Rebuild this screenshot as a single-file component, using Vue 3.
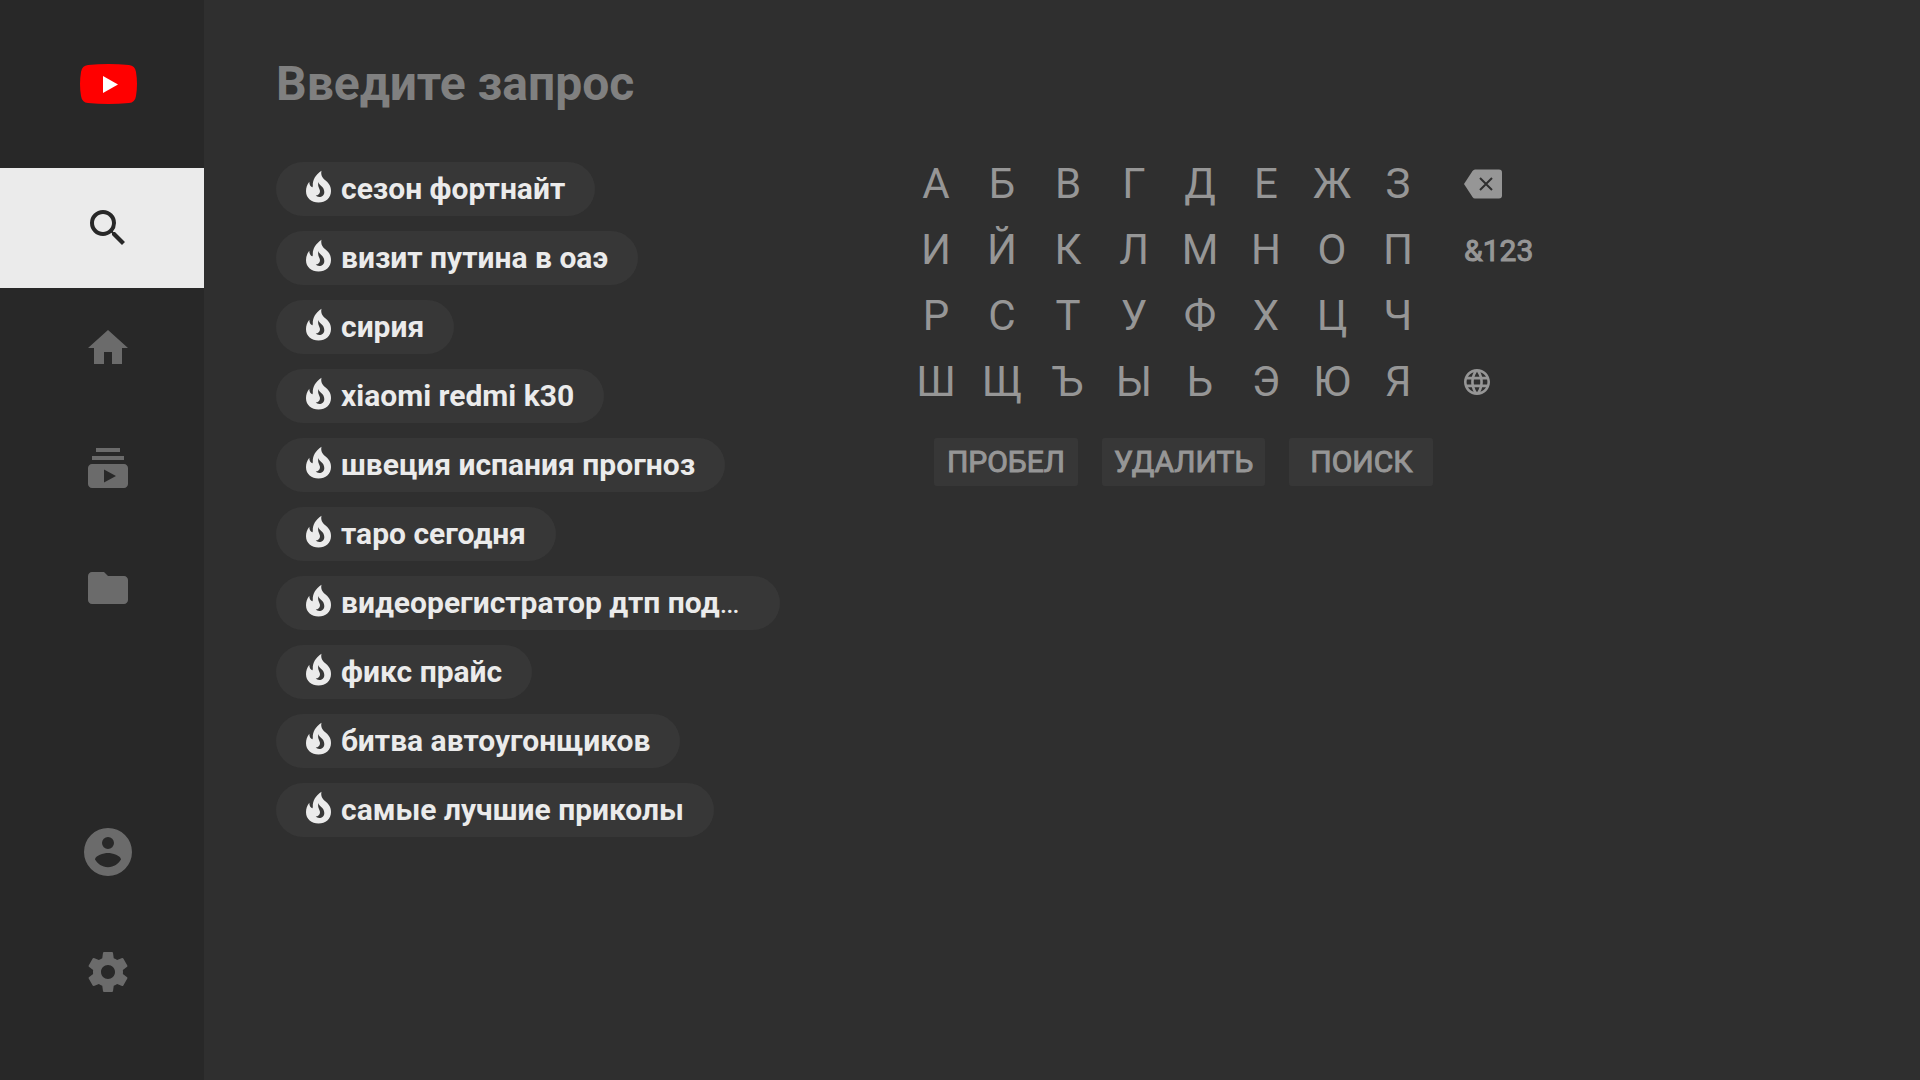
<script setup>
const menu = [
  { label: 'Поиск', path: 'M15.5 14h-.79l-.28-.27A6.471 6.471 0 0 0 16 9.5 6.5 6.5 0 1 0 9.5 16c1.61 0 3.09-.59 4.23-1.57l.27.28v.79l5 4.99L20.49 19l-4.99-5zm-6 0C7.01 14 5 11.99 5 9.5S7.01 5 9.5 5 14 7.01 14 9.5 11.99 14 9.5 14z', active: true },
  { label: 'Главная', path: 'M10 20v-6h4v6h5v-8h3L12 3 2 12h3v8z' },
  { label: 'Подписки', path: 'M20 8H4V6h16v2zm-2-6H6v2h12V2zm4 10v8c0 1.1-.9 2-2 2H4c-1.1 0-2-.9-2-2v-8c0-1.1.9-2 2-2h16c1.1 0 2 .9 2 2zm-6 4l-6-3.27v6.53L16 16z' },
  { label: 'Библиотека', path: 'M10 4H4c-1.1 0-1.99.9-1.99 2L2 18c0 1.1.9 2 2 2h16c1.1 0 2-.9 2-2V8c0-1.1-.9-2-2-2h-8l-2-2z' },
]
const account = [
  { label: 'Аккаунт', path: 'M12 0a12 12 0 1 0 0 24 12 12 0 0 0 0-24zM12 4.5a3 3 0 1 1 0 6 3 3 0 0 1 0-6zM12 19.6c-3 0-5.2-1.6-6.5-3.8.1-2.1 4.3-3.3 6.5-3.3s6.4 1.2 6.5 3.3c-1.3 2.2-3.5 3.8-6.5 3.8z' },
  { label: 'Настройки', path: 'M19.43 12.98c.04-.32.07-.64.07-.98s-.03-.66-.07-.98l2.11-1.65c.19-.15.24-.42.12-.64l-2-3.46c-.12-.22-.39-.3-.61-.22l-2.49 1c-.52-.4-1.08-.73-1.69-.98l-.38-2.65C14.46 2.18 14.25 2 14 2h-4c-.25 0-.46.18-.49.42l-.38 2.65c-.61.25-1.17.59-1.69.98l-2.49-1c-.23-.09-.49 0-.61.22l-2 3.46c-.13.22-.07.49.12.64l2.11 1.65c-.04.32-.07.65-.07.98s.03.66.07.98l-2.11 1.65c-.19.15-.24.42-.12.64l2 3.46c.12.22.39.3.61.22l2.49-1c.52.4 1.08.73 1.69.98l.38 2.65c.03.24.24.42.49.42h4c.25 0 .46-.18.49-.42l.38-2.65c.61-.25 1.17-.59 1.69-.98l2.49 1c.23.09.49 0 .61-.22l2-3.46c.12-.22.07-.49-.12-.64l-2.11-1.65zM12 15.5c-1.93 0-3.5-1.57-3.5-3.5s1.57-3.5 3.5-3.5 3.5 1.57 3.5 3.5-1.57 3.5-3.5 3.5z' },
]
const suggestions = [
  { text: 'сезон фортнайт' },
  { text: 'визит путина в оаэ' },
  { text: 'сирия' },
  { text: 'xiaomi redmi k30' },
  { text: 'швеция испания прогноз' },
  { text: 'таро сегодня' },
  { text: 'видеорегистратор дтп под', cut: true },
  { text: 'фикс прайс' },
  { text: 'битва автоугонщиков' },
  { text: 'самые лучшие приколы' },
]
const letters = [...'АБВГДЕЖЗИЙКЛМНОПРСТУФХЦЧШЩЪЫЬЭЮЯ']
</script>

<template>
  <div class="page">
    <nav class="sidebar">
      <a class="logo" href="#" aria-label="YouTube">
        <svg width="57" height="40" viewBox="0 0 57 40">
          <path fill="#f00" d="M8 1Q28 -1 49 1Q55 1.5 56 8Q58 20 56 32Q55 38.5 49 39Q28 41 8 39Q2 38.5 1 32Q-1 20 1 8Q2 1.5 8 1Z" />
          <path fill="#fff" d="M23 12l15 8.5L23 29z" />
        </svg>
      </a>
      <a v-for="m in menu" :key="m.label" class="item" :class="{ active: m.active }" href="#" :aria-label="m.label">
        <svg width="48" height="48" viewBox="0 0 24 24"><path :d="m.path" /></svg>
      </a>
      <div class="spacer"></div>
      <a v-for="m in account" :key="m.label" class="item" href="#" :aria-label="m.label">
        <svg width="48" height="48" viewBox="0 0 24 24"><path fill-rule="evenodd" :d="m.path" /></svg>
      </a>
    </nav>

    <main class="main">
      <input class="query" type="text" placeholder="Введите запрос" aria-label="Введите запрос" />
      <div class="columns">
        <div class="suggestions">
          <button v-for="s in suggestions" :key="s.text" type="button" class="chip" :class="{ wide: s.cut }">
            <svg class="flame" width="26" height="34" viewBox="0 0 26 34">
              <path fill-rule="evenodd" d="M15.5.8C9.5 5 6.5 10 6.8 15.5c0 1-.2 1.8-.6 1.8-1.5-.5-3-2.5-2.9-5.5C1 14.5 0 18 0 21.2 0 28 5.5 32.5 12.5 32.5S25 28 25 21c0-5.5-2.8-8.5-6-11C16.500 8 14.500 5 15.5.8zM12.3 12c.6 3.5 6 4.5 6 10 0 3.2-2.3 5-5 5-1.5 0-2.7-.5-3.6-1.4 2.4-.2 4.3-1.6 4.3-4.3 0-2.8-2.6-4-1.7-9.3z" />
            </svg>
            <span><b>{{ s.text }}</b><template v-if="s.cut">…</template></span>
          </button>
        </div>

        <div class="keyboard">
          <div class="keys">
            <div class="letters">
              <button v-for="l in letters" :key="l" type="button" class="key">{{ l }}</button>
            </div>
            <div class="side">
              <button type="button" aria-label="Стереть">
                <svg width="38" height="30" viewBox="0 0 38 30">
                  <path d="M11 .5h24q3 0 3 3v23q0 3-3 3H11q-1.5 0-2.5-1.5L0 15 8.5 2Q9.5.5 11 .5z" />
                  <path class="cross" d="M16 9l12 12M28 9L16 21" />
                </svg>
              </button>
              <button type="button" class="label">&amp;123</button>
              <span></span>
              <button type="button" aria-label="Язык">
                <svg width="26" height="26" viewBox="2 2 20 20">
                  <path d="M11.99 2C6.47 2 2 6.48 2 12s4.47 10 9.99 10C17.52 22 22 17.52 22 12S17.52 2 11.99 2zm6.93 6h-2.95c-.32-1.25-.78-2.45-1.38-3.56 1.84.63 3.37 1.91 4.33 3.56zM12 4.04c.83 1.2 1.48 2.53 1.91 3.96h-3.82c.43-1.43 1.08-2.76 1.91-3.96zM4.26 14C4.1 13.36 4 12.69 4 12s.1-1.36.26-2h3.38c-.08.66-.14 1.32-.14 2s.06 1.34.14 2H4.26zm.82 2h2.95c.32 1.25.78 2.45 1.38 3.56-1.84-.63-3.37-1.9-4.33-3.56zm2.95-8H5.08c.96-1.66 2.49-2.93 4.33-3.56C8.81 5.55 8.35 6.75 8.03 8zM12 19.96c-.83-1.2-1.48-2.53-1.91-3.96h3.82c-.43 1.43-1.08 2.76-1.91 3.96zM14.34 14H9.66c-.09-.66-.16-1.32-.16-2s.07-1.35.16-2h4.68c.09.65.16 1.32.16 2s-.07 1.34-.16 2zm.25 5.56c.6-1.11 1.06-2.31 1.38-3.56h2.95c-.96 1.65-2.49 2.93-4.33 3.56zM16.36 14c.08-.66.14-1.32.14-2s-.06-1.34-.14-2h3.38c.16.64.26 1.31.26 2s-.1 1.36-.26 2h-3.38z" />
                </svg>
              </button>
            </div>
          </div>
          <div class="actions">
            <button type="button" class="label">ПРОБЕЛ</button>
            <button type="button" class="label">УДАЛИТЬ</button>
            <button type="button" class="label">ПОИСК</button>
          </div>
        </div>
      </div>
    </main>
  </div>
</template>

<style>
body {
  margin: 0;
  background: #2f2f2f;
}
</style>

<style scoped>
.page {
  display: flex;
  min-height: 100vh;
  background: #2f2f2f;
  font-family: Roboto, "Liberation Sans", sans-serif;
}
svg {
  display: block;
  flex: none;
}
button {
  margin: 0;
  padding: 0;
  border: 0;
  background: none;
  color: inherit;
  font: inherit;
}
.sidebar {
  display: flex;
  flex: none;
  flex-direction: column;
  box-sizing: border-box;
  width: 204px;
  padding-bottom: 48px;
  background: #282828;
}
.logo {
  display: flex;
  align-items: center;
  height: 168px;
  padding-left: 80px;
}
.item {
  display: flex;
  align-items: center;
  height: 120px;
  padding-left: 84px;
  fill: #6b6b6b;
}
.item.active {
  background: #ebebeb;
  fill: #282828;
}
.spacer {
  flex: 1;
}
.main {
  flex: 1;
  min-width: 0;
  padding: 48px 72px;
}
.query {
  display: block;
  width: 100%;
  height: 70px;
  margin-bottom: 32px;
  padding: 0;
  border: 0;
  outline: 0;
  background: none;
  color: #ebebeb;
  font: bold 48px Roboto, "Liberation Sans", sans-serif;
}
.query::placeholder {
  color: #808080;
  opacity: 1;
}
.columns {
  display: flex;
  align-items: flex-start;
  gap: 123px;
}
.suggestions {
  display: flex;
  flex: none;
  flex-direction: column;
  align-items: flex-start;
  gap: 15px;
  width: 504px;
  padding-top: 12px;
}
.chip {
  display: flex;
  align-items: center;
  gap: 9px;
  height: 54px;
  padding: 0 30px;
  border-radius: 27px;
  background: #373737;
  color: #ebebeb;
  font-size: 30px;
  line-height: 54px;
  white-space: nowrap;
}
.chip.wide {
  width: 100%;
}
.flame {
  margin-bottom: 4px;
  fill: #ebebeb;
}
.keyboard {
  color: #969696;
}
.keys {
  display: flex;
  gap: 33px;
}
.letters {
  display: grid;
  grid-template-columns: repeat(8, 66px);
  grid-auto-rows: 66px;
}
.key {
  font-size: 42px;
}
.side {
  display: grid;
  grid-template-rows: repeat(4, 66px);
  align-items: center;
  justify-items: start;
  height: 264px;
  padding-top: 1px;
  box-sizing: border-box;
  fill: #969696;
}
.label {
  font-size: 30px;
  -webkit-text-stroke: 1px #969696;
}
.cross {
  fill: none;
  stroke: #2f2f2f;
  stroke-width: 2px;
}
.actions {
  display: flex;
  gap: 24px;
  padding: 24px 0 0 31px;
}
.actions button {
  min-width: 144px;
  height: 48px;
  padding: 0 12px 2px;
  border-radius: 3px;
  background: #373737;
}
</style>
